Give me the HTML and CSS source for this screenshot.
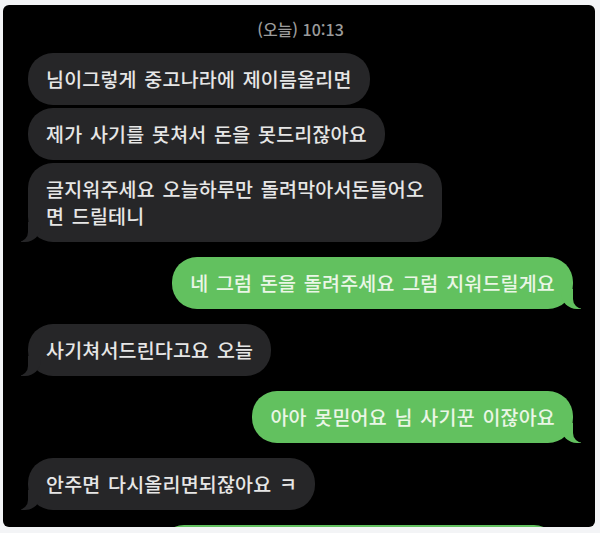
FILE: index.html
```html
<!DOCTYPE html>
<html lang="ko">
<head>
    <meta charset="UTF-8">
    <meta name="viewport" content="width=device-width, initial-scale=1.0">
    <title>메시지</title>
    <link rel="stylesheet" href="styles.css">
</head>
<body>
<div class="screen">
    <div class="timestamp">(오늘) 10:13</div>

    <div class="thread">
        <div class="bubble in">님이그렇게 중고나라에 제이름올리면</div>
        <div class="bubble in same">제가 사기를 못쳐서 돈을 못드리잖아요</div>
        <div class="bubble in same tail">글지워주세요 오늘하루만 돌려막아서돈들어오<br>면 드릴테니</div>

        <div class="bubble out tail">네 그럼 돈을 돌려주세요 그럼 지워드릴게요</div>

        <div class="bubble in tail">사기쳐서드린다고요 오늘</div>

        <div class="bubble out tail">아아 못믿어요 님 사기꾼 이잖아요</div>

        <div class="bubble in tail">안주면 다시올리면되잖아요 ㅋ</div>

        <div class="bubble out cut"></div>
    </div>
</div>
</body>
</html>
```

FILE: styles.css
```css
body {
    margin: 0;
    background: #f3f4f6;
    font-family: "Noto Sans CJK KR", "Noto Sans", sans-serif;
}

.screen {
    margin: 5px 5px 0 3px;
    height: 522px;
    box-sizing: border-box;
    padding: 14px 22px 0 25px;
    background: #000;
    border-radius: 6px;
    overflow: hidden;
}

.timestamp {
    text-align: center;
    color: #9b9b9b;
    font-size: 16px;
    font-weight: 500;
    line-height: 20px;
    margin-bottom: 14px;
}

.thread {
    display: flex;
    flex-direction: column;
}

.bubble {
    position: relative;
    padding: 12px 18px 13px;
    border-radius: 25px;
    font-size: 19.5px;
    font-weight: 500;
    line-height: 27px;
    letter-spacing: 0.2px;
    word-spacing: 2px;
    margin-top: 15px;
}

.bubble:first-child {
    margin-top: 0;
}

.bubble.same {
    margin-top: 3px;
}

.in {
    align-self: flex-start;
    background: #262628;
    color: #e6e6e6;
}

.out {
    align-self: flex-end;
    background: #62c15f;
    color: #eaf6e6;
}

/* little curled tail at the bottom corner */
.tail::before,
.tail::after {
    content: "";
    position: absolute;
    bottom: 0;
    height: 20px;
}

.in.tail::before {
    left: -7px;
    width: 20px;
    background: #262628;
    border-bottom-right-radius: 16px;
}

.in.tail::after {
    left: -10px;
    width: 10px;
    background: #000;
    border-bottom-right-radius: 10px;
}

.out.tail::before {
    right: -8px;
    width: 20px;
    background: #62c15f;
    border-bottom-left-radius: 16px;
}

.out.tail::after {
    right: -11px;
    width: 11px;
    background: #000;
    border-bottom-left-radius: 10px;
}

.cut {
    width: 400px;
    height: 52px;
    box-sizing: border-box;
    margin-right: 14px;
}
```
